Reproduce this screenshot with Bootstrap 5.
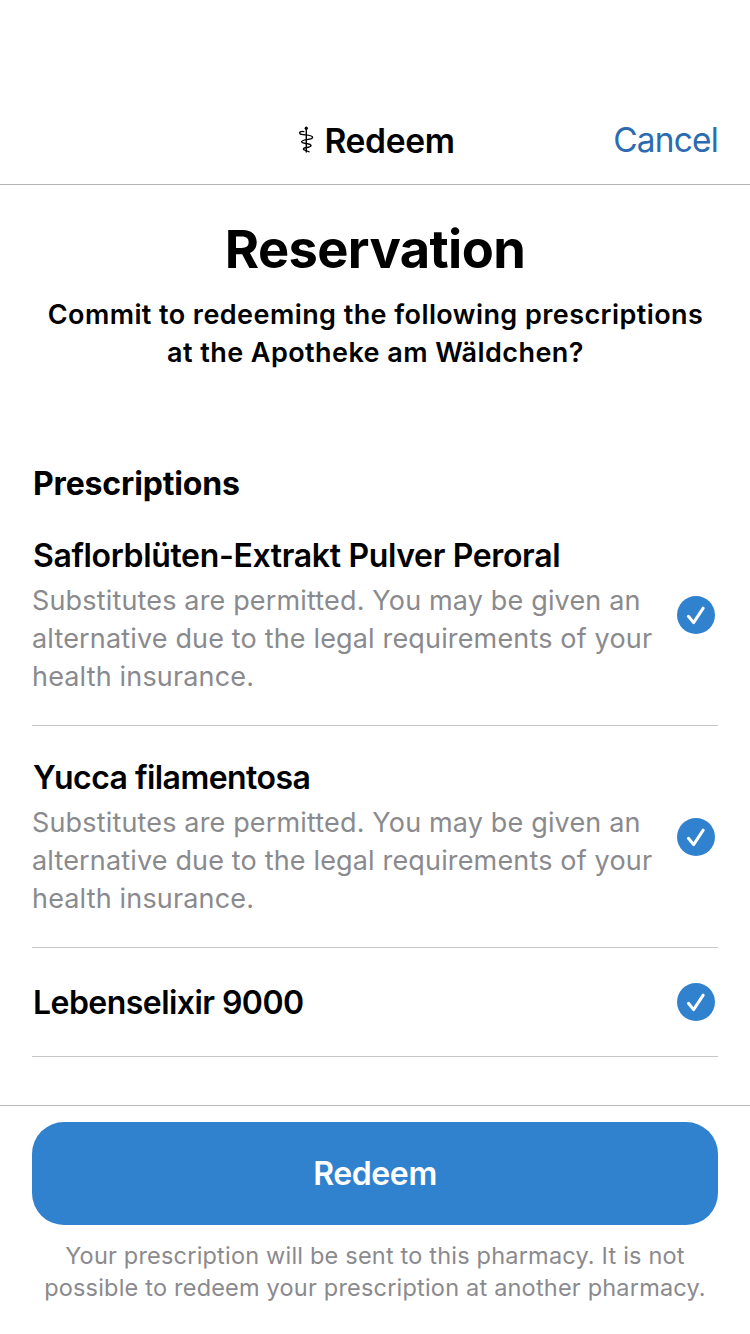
<!DOCTYPE html>
<html lang="en">
<head>
<meta charset="utf-8">
<meta name="viewport" content="width=device-width, initial-scale=1">
<title>Redeem</title>
<link href="https://cdn.jsdelivr.net/npm/bootstrap@5.3.0/dist/css/bootstrap.min.css" rel="stylesheet">
<style>
body{font-family:Inter,"Liberation Sans",sans-serif;color:#000;background:#fff;height:1334px;overflow:hidden}
.gutter{padding-left:32px;padding-right:32px}
.topbar{height:185px;padding-top:96px;border-bottom:1px solid #b3b3b3}
.topbar .side{width:180px}
.bar-title{font-size:33.6px;font-weight:600;line-height:89px;letter-spacing:-.37px;gap:9px;padding-left:2px}
.staff{width:18px;height:30px}
.cancel{font-size:33.4px;color:#2b6cb0;line-height:89px;letter-spacing:-.8px;text-decoration:none;white-space:nowrap}
.headline{font-size:52.4px;font-weight:700;line-height:64px;margin-top:32px;letter-spacing:-.6px}
.question{font-size:27px;font-weight:600;line-height:38px;margin-top:15px;letter-spacing:.43px;padding-left:1px}
.section-title{font-size:32px;font-weight:700;line-height:40px;margin:92px 0 0;letter-spacing:-.15px;padding-left:1px}
.item{border-bottom:1px solid #c6c6c8}
.item-tall{height:222px;padding-top:30px}
.item-short{height:109px}
.item-name{font-size:32px;font-weight:600;line-height:43px;letter-spacing:-.35px;margin:0;padding-left:1px}
.item-name.snug{letter-spacing:-.55px}
.item-note{font-size:27px;line-height:38px;color:#8a8a8e;margin:5px 0 0;letter-spacing:.16px;white-space:nowrap}
.tick{width:38px;height:38px;margin-right:3px}
.item-tall .tick{margin-top:62px}
.footer-bar{height:229px;border-top:1px solid #b8b8b8;padding-top:16px}
.redeem,.redeem:hover{height:103px;border-radius:32px;background:#3182ce;color:#fff;font-size:32px;font-weight:600;border:0;letter-spacing:-.4px}
.hint{font-size:23.5px;line-height:32px;color:#8a8a8e;margin:15px -20px 0;letter-spacing:.2px}
</style>
</head>
<body class="d-flex flex-column">
<svg class="d-none"><symbol id="check" viewBox="0 0 38 38"><circle cx="19" cy="19" r="19" fill="#3182ce"/><path d="M11.4 20.3 16.6 26.6 26.2 12.2" fill="none" stroke="#fff" stroke-width="3" stroke-linecap="round" stroke-linejoin="round"/></symbol></svg>
<header class="topbar gutter d-flex justify-content-between">
<div class="side"></div>
<div class="bar-title d-flex align-items-center">
<svg class="staff" viewBox="0 0 18 30" fill="none" stroke="#000" stroke-width="1.4" stroke-linecap="round"><circle cx="9.3" cy="3.2" r="1.6" fill="#000" stroke="none"/><path d="M9.3 3V27"/><path d="M6.8 6.6C3.8 5.9 2 7.2 3 8.7 4.4 10.3 15.6 9.4 15.6 12.2 15.6 15.4 4.6 13.8 4.6 16.8 4.6 19 14 18 14 20.6 14 23.2 6.4 21.7 6.4 24 6.4 25.6 10 25.3 12 26.8" /></svg>
<span>Redeem</span></div>
<a class="cancel side text-end" href="#">Cancel</a>
</header>
<main class="flex-grow-1 gutter">
<h1 class="headline mb-0 text-center">Reservation</h1>
<p class="question mb-0 text-center text-nowrap">Commit to redeeming the following prescriptions<br>at the Apotheke am Wäldchen?</p>
<h2 class="section-title">Prescriptions</h2>
<section class="item item-tall d-flex justify-content-between">
<div><h3 class="item-name">Saflorblüten-Extrakt Pulver Peroral</h3>
<p class="item-note">Substitutes are permitted. You may be given an<br>alternative due to the legal requirements of your<br>health insurance.</p></div>
<svg class="tick flex-shrink-0"><use href="#check"/></svg>
</section>
<section class="item item-tall d-flex justify-content-between">
<div><h3 class="item-name snug">Yucca filamentosa</h3>
<p class="item-note">Substitutes are permitted. You may be given an<br>alternative due to the legal requirements of your<br>health insurance.</p></div>
<svg class="tick flex-shrink-0"><use href="#check"/></svg>
</section>
<section class="item item-short d-flex align-items-center justify-content-between">
<h3 class="item-name snug">Lebenselixir 9000</h3>
<svg class="tick flex-shrink-0"><use href="#check"/></svg>
</section>
</main>
<footer class="footer-bar gutter text-center">
<button class="btn redeem w-100">Redeem</button>
<p class="hint text-nowrap">Your prescription will be sent to this pharmacy. It is not<br>possible to redeem your prescription at another pharmacy.</p>
</footer>
<script src="https://cdn.jsdelivr.net/npm/bootstrap@5.3.0/dist/js/bootstrap.bundle.min.js"></script>
</body>
</html>
